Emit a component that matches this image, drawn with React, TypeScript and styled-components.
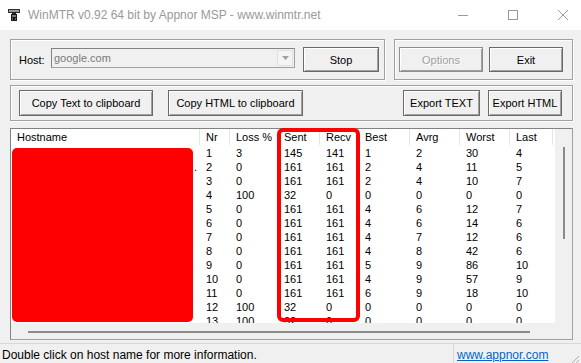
import styled, { createGlobalStyle } from "styled-components";

const GlobalStyle = createGlobalStyle`
body {
  margin: 0;
  background: #f0f0f0;
  overflow: hidden;
  font-family: "Liberation Sans", Arial, sans-serif;
}
`;

type Row = [number, number, number, number, number, number, number, number];

const rows: Row[] = [
  [1, 3, 145, 141, 1, 2, 30, 4],
  [2, 0, 161, 161, 2, 4, 11, 5],
  [3, 0, 161, 161, 2, 4, 10, 7],
  [4, 100, 32, 0, 0, 0, 0, 0],
  [5, 0, 161, 161, 4, 6, 12, 7],
  [6, 0, 161, 161, 4, 6, 14, 6],
  [7, 0, 161, 161, 4, 7, 12, 6],
  [8, 0, 161, 161, 4, 8, 42, 6],
  [9, 0, 161, 161, 5, 9, 86, 10],
  [10, 0, 161, 161, 4, 9, 57, 9],
  [11, 0, 161, 161, 6, 9, 18, 10],
  [12, 100, 32, 0, 0, 0, 0, 0],
  [13, 100, 32, 0, 0, 0, 0, 0],
];

const columns = ["Hostname", "Nr", "Loss %", "Sent", "Recv", "Best", "Avrg", "Worst", "Last"];
const COLS = "189px 30px 48px 42px 39px 51px 50px 50px 43px";

const AppIcon = () => (
  <svg width="12" height="13" viewBox="0 0 12 13">
    <rect x="0.5" y="0.5" width="11" height="3" fill="#9a9a9a" stroke="#333" />
    <rect x="4" y="3" width="4" height="2" fill="#222" />
    <rect x="3" y="5" width="6" height="7" fill="#1a1a1a" />
    <rect x="4" y="6" width="4" height="2" fill="#777" />
    <rect x="4" y="9" width="1" height="2" fill="#666" />
    <rect x="7" y="9" width="1" height="2" fill="#666" />
  </svg>
);

export default function App() {
  return (
    <Window>
      <GlobalStyle />
      <TitleBar>
        <AppIcon />
        <TitleText>WinMTR v0.92 64 bit by Appnor MSP - www.winmtr.net</TitleText>
        <Controls>
          <svg width="10" height="10" viewBox="0 0 10 10">
            <line x1="0" y1="5.5" x2="10" y2="5.5" stroke="#999" />
          </svg>
          <svg width="10" height="10" viewBox="0 0 10 10">
            <rect x="0.5" y="0.5" width="9" height="9" fill="none" stroke="#999" />
          </svg>
          <svg width="10" height="10" viewBox="0 0 10 10">
            <path d="M0 0 L10 10 M10 0 L0 10" stroke="#999" />
          </svg>
        </Controls>
      </TitleBar>

      <Content>
        <TopRow>
          <HostGroup>
            <Label>Host:</Label>
            <Combo>
              <ComboText>google.com</ComboText>
              <ComboArrow>
                <svg width="7" height="4" viewBox="0 0 7 4">
                  <path d="M0 0 L7 0 L3.5 4 Z" fill="#a0a0a0" />
                </svg>
              </ComboArrow>
            </Combo>
            <Button $w={76}>Stop</Button>
          </HostGroup>
          <ActionGroup>
            <Button $w={84} disabled>Options</Button>
            <Button $w={74}>Exit</Button>
          </ActionGroup>
        </TopRow>

        <ExportGroup>
          <Button $w={134} $h={26}>Copy Text to clipboard</Button>
          <Button $w={135} $h={26}>Copy HTML to clipboard</Button>
          <Spacer />
          <Button $w={77} $h={26}>Export TEXT</Button>
          <Button $w={74} $h={26}>Export HTML</Button>
        </ExportGroup>

        <List>
          <ListMain>
            <Header>
              {columns.map((c) => (
                <HeadCell key={c}>{c}</HeadCell>
              ))}
            </Header>
            <Body>
              <Redaction />
              <HostDot>.</HostDot>
              {rows.map((r, i) =>
                r.map((v, j) => (
                  <Cell key={`${i}-${j}`} style={{ gridRow: i + 1, gridColumn: j + 2 }}>
                    {v}
                  </Cell>
                ))
              )}
            </Body>
          </ListMain>
          <VTrack>
            <VThumb />
          </VTrack>
          <HTrack>
            <HThumb />
          </HTrack>
          <Corner />
          <Highlight />
        </List>
      </Content>

      <StatusBar>
        <StatusText>Double click on host name for more information.</StatusText>
        <LinkPanel>
          <Link>www.appnor.com</Link>
        </LinkPanel>
        <Grip>
          <svg width="12" height="12" viewBox="0 0 12 12">
            <path d="M11 3 L3 11 M11 7 L7 11" stroke="#b0b0b0" />
          </svg>
        </Grip>
      </StatusBar>
    </Window>
  );
}

const Window = styled.div`
  width: 581px;
  height: 363px;
  display: flex;
  flex-direction: column;
  background: #f0f0f0;
  overflow: hidden;
`;

const TitleBar = styled.div`
  height: 30px;
  background: #fff;
  display: flex;
  align-items: center;
  padding-left: 8px;
  flex-shrink: 0;
`;

const TitleText = styled.span`
  margin-left: 8px;
  font-size: 12px;
  color: #999;
`;

const Controls = styled.div`
  margin-left: auto;
  display: flex;
  gap: 40px;
  padding-right: 13px;
`;

const Content = styled.div`
  padding: 9px 8px 0 10px;
  display: flex;
  flex-direction: column;
`;

const TopRow = styled.div`
  display: flex;
  gap: 9px;
`;

const Group = styled.div`
  box-sizing: border-box;
  border: 1px solid #a0a0a0;
  box-shadow: inset 1px 1px 0 #fff, 1px 1px 0 #fff;
  display: flex;
  align-items: center;
`;

const HostGroup = styled(Group)`
  width: 375px;
  height: 41px;
  padding-left: 8px;
`;

const ActionGroup = styled(Group)`
  flex: 1;
  height: 41px;
  padding-left: 4px;
  gap: 6px;
`;

const ExportGroup = styled(Group)`
  margin-top: 5px;
  height: 36px;
  padding: 0 10px 0 8px;
  gap: 15px;
  & > button:last-child {
    margin-left: -7px;
  }
`;

const Spacer = styled.div`
  flex: 1;
`;

const Label = styled.span`
  font-size: 11px;
  color: #000;
  width: 32px;
`;

const Combo = styled.div`
  box-sizing: border-box;
  width: 244px;
  height: 20px;
  margin-bottom: 3px;
  border: 1px solid #a0a0a0;
  border-top-color: #828282;
  border-left-color: #828282;
  background: #f0f0f0;
  display: flex;
  align-items: center;
`;

const ComboText = styled.span`
  flex: 1;
  font-size: 11px;
  color: #7a7a7a;
  padding-left: 2px;
`;

const ComboArrow = styled.div`
  width: 16px;
  height: 16px;
  margin-right: 1px;
  background: #f4f4f4;
  border: 1px solid #e0e0e0;
  box-sizing: border-box;
  display: flex;
  align-items: center;
  justify-content: center;
`;

const Button = styled.button<{ $w: number; $h?: number }>`
  box-sizing: border-box;
  width: ${(p) => p.$w}px;
  height: ${(p) => p.$h ?? 25}px;
  margin-left: 0;
  padding: 0;
  font-family: "Liberation Sans", Arial, sans-serif;
  font-size: 11px;
  color: #000;
  background: #f0f0f0;
  border: 1px solid #6a6a6a;
  box-shadow: inset 1px 1px 0 #fff, inset -1px -1px 0 #a0a0a0;
  flex-shrink: 0;
  ${HostGroup} & {
    margin-left: 8px;
  }
  &:disabled {
    color: #a0a0a0;
    text-shadow: 1px 1px 0 #fff;
    border-color: #8e8e8e;
  }
`;

const List = styled.div`
  position: relative;
  margin-top: 7px;
  box-sizing: border-box;
  height: 212px;
  border: 1px solid #a0a0a0;
  border-top-color: #828282;
  border-left-color: #828282;
  background: #f0f0f0;
  display: grid;
  grid-template-columns: 544px 1fr;
  grid-template-rows: 1fr 16px;
`;

const ListMain = styled.div`
  display: flex;
  flex-direction: column;
  overflow: hidden;
`;

const Header = styled.div`
  display: grid;
  grid-template-columns: ${COLS};
  height: 16px;
  background: #fff;
  flex-shrink: 0;
`;

const HeadCell = styled.div`
  font-size: 11px;
  line-height: 16px;
  padding-left: 6px;
  border-right: 1px solid #e5e5e5;
  white-space: nowrap;
  overflow: hidden;
`;

const Body = styled.div`
  flex: 1;
  background: #fff;
  display: grid;
  grid-template-columns: ${COLS};
  grid-auto-rows: 14px;
  padding-top: 1px;
  overflow: hidden;
`;

const Cell = styled.div`
  font-size: 11px;
  line-height: 14px;
  padding-left: 6px;
  white-space: nowrap;
`;

const Redaction = styled.div`
  grid-column: 1;
  grid-row: 1 / span 13;
  align-self: start;
  margin: 2px 0 0 1px;
  width: 181px;
  height: 174px;
  background: #ff0000;
  border-radius: 5px;
`;

const HostDot = styled.span`
  grid-column: 1;
  grid-row: 2;
  justify-self: end;
  margin-right: 3px;
  font-size: 11px;
  line-height: 14px;
`;

const VTrack = styled.div`
  grid-column: 2;
  grid-row: 1;
  padding: 18px 0 0 8px;
`;

const VThumb = styled.div`
  width: 2px;
  height: 92px;
  background: #8a8a8a;
`;

const HTrack = styled.div`
  grid-column: 1;
  grid-row: 2;
  padding: 8px 0 0 17px;
`;

const HThumb = styled.div`
  width: 502px;
  height: 2px;
  background: #8a8a8a;
`;

const Corner = styled.div`
  grid-column: 2;
  grid-row: 2;
`;

const Highlight = styled.div`
  position: absolute;
  left: 266px;
  top: -1px;
  width: 83px;
  height: 194px;
  box-sizing: border-box;
  border: 4px solid #ff0000;
  border-radius: 6px;
  pointer-events: none;
`;

const StatusBar = styled.div`
  margin-top: 3px;
  height: 22px;
  border-top: 1px solid #d7d7d7;
  display: flex;
  align-items: stretch;
`;

const StatusText = styled.span`
  flex: 1;
  font-size: 12px;
  line-height: 22px;
  padding-left: 2px;
  white-space: nowrap;
`;

const LinkPanel = styled.div`
  width: 105px;
  border-left: 1px solid #d7d7d7;
  padding-left: 3px;
  display: flex;
  align-items: center;
`;

const Link = styled.span`
  font-size: 12px;
  color: #0066cc;
  text-decoration: underline;
`;

const Grip = styled.div`
  width: 18px;
  display: flex;
  align-items: flex-end;
  justify-content: flex-end;
  padding: 0 1px 1px 0;
`;
